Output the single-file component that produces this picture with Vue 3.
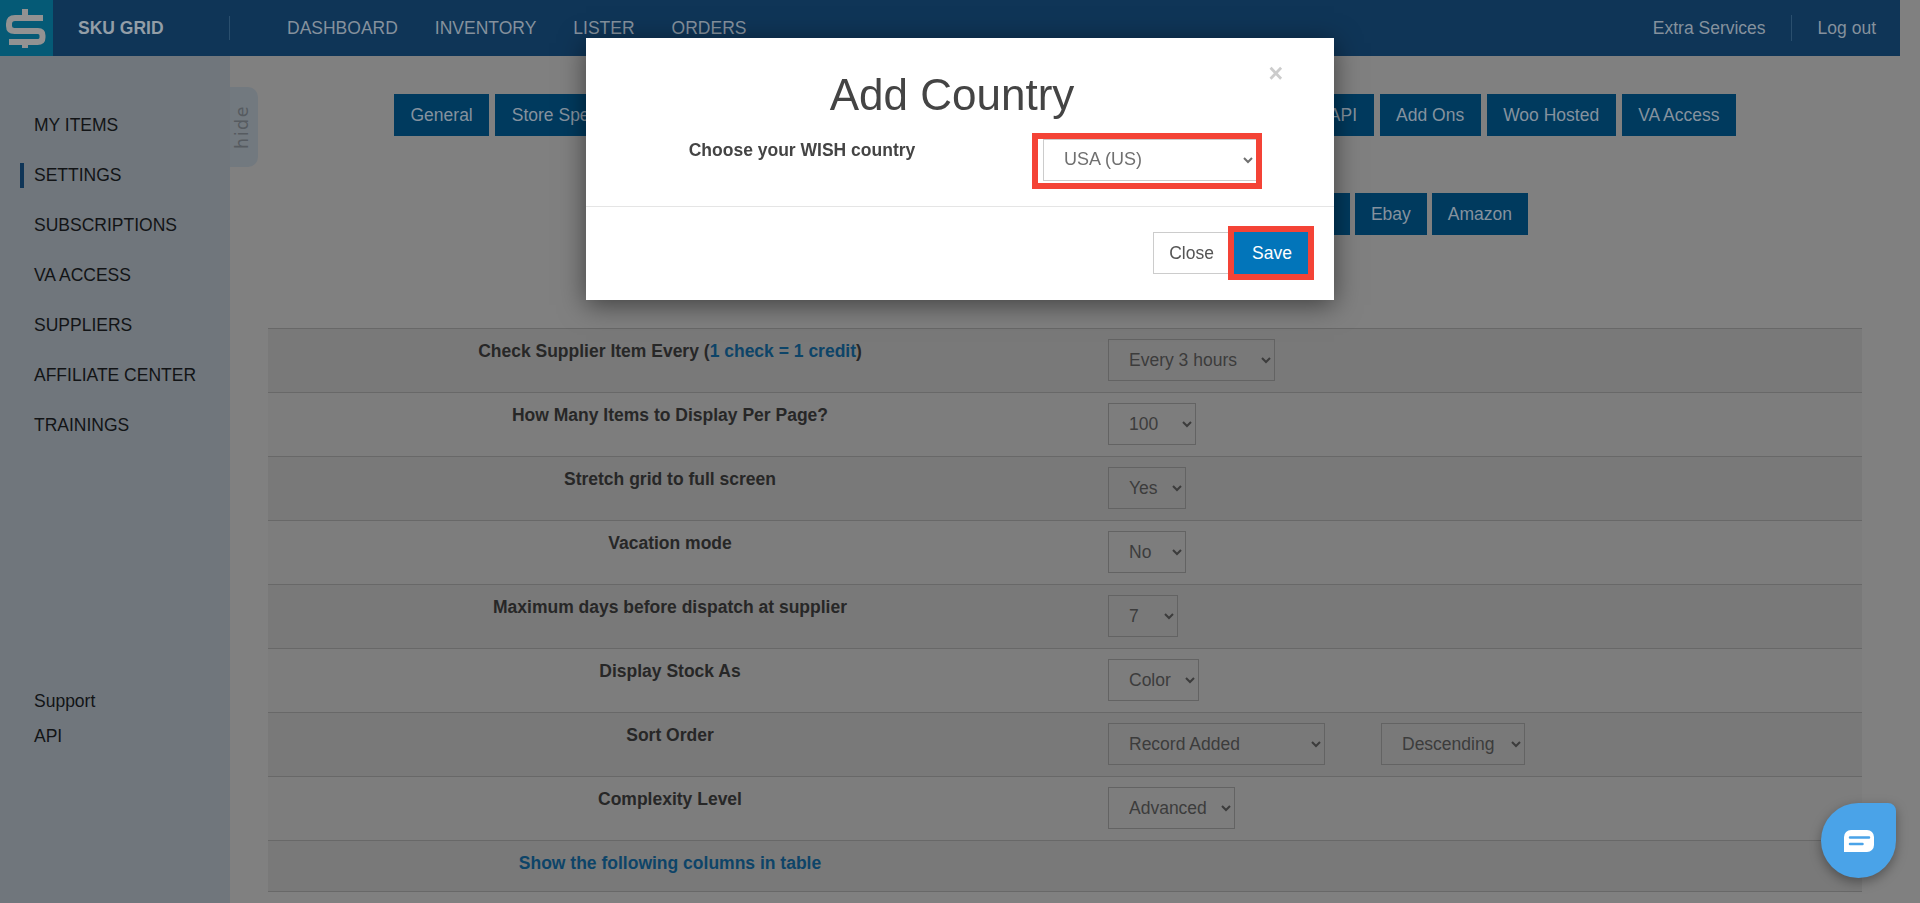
<script setup>
const topLinks = ['DASHBOARD', 'INVENTORY', 'LISTER', 'ORDERS']
const sideLinks = ['MY ITEMS', 'SETTINGS', 'SUBSCRIPTIONS', 'VA ACCESS', 'SUPPLIERS', 'AFFILIATE CENTER', 'TRAININGS']

const rows = [
  { label: 'Check Supplier Item Every', credit: true, selects: [{ text: 'Every 3 hours', width: 167 }] },
  { label: 'How Many Items to Display Per Page?', selects: [{ text: '100', width: 88 }] },
  { label: 'Stretch grid to full screen', selects: [{ text: 'Yes', width: 78 }] },
  { label: 'Vacation mode', selects: [{ text: 'No', width: 78 }] },
  { label: 'Maximum days before dispatch at supplier', selects: [{ text: '7', width: 70 }] },
  { label: 'Display Stock As', selects: [{ text: 'Color', width: 91 }] },
  { label: 'Sort Order', selects: [{ text: 'Record Added', width: 217 }, { text: 'Descending', width: 144 }] },
  { label: 'Complexity Level', selects: [{ text: 'Advanced', width: 127 }] }
]
</script>

<template>
  <div class="page">
    <header class="topbar">
      <div class="logo">
        <svg width="53" height="56" viewBox="0 0 53 56" fill="none" stroke="#929292" stroke-width="6">
          <path d="M25 9v7M25 41v7" />
          <path d="M43 18H15q-6 0-6 6v2q0 5 5.500 5H38q4.500 0 4.500 4.500v2q0 4.500-5 4.500H9" />
        </svg>
      </div>
      <div class="brand">SKU GRID</div>
      <nav class="top-links">
        <a v-for="link in topLinks" :key="link">{{ link }}</a>
      </nav>
      <div class="top-right">
        <a>Extra Services</a>
        <a class="logout">Log out</a>
      </div>
    </header>

    <div class="body">
      <aside class="sidebar">
        <ul class="side-links">
          <li v-for="link in sideLinks" :key="link" :class="{ active: link === 'SETTINGS' }">{{ link }}</li>
        </ul>
        <div class="side-bottom">
          <a>Support</a>
          <a>API</a>
        </div>
        <div class="hide-tab"><span>hide</span></div>
      </aside>

      <main class="content">
        <!-- the buttons in the middle of both rows sit behind the modal -->
        <div class="tabs tabs-main">
          <a class="tab">General</a>
          <a class="tab">Store Specific</a>
          <a v-for="n in 5" :key="n" class="tab grow"></a>
          <a class="tab">API</a>
          <a class="tab">Add Ons</a>
          <a class="tab">Woo Hosted</a>
          <a class="tab">VA Access</a>
        </div>
        <div class="tabs tabs-supplier">
          <a v-for="n in 6" :key="n" class="tab grow"></a>
          <a class="tab">Ebay</a>
          <a class="tab">Amazon</a>
        </div>

        <div class="settings">
          <div v-for="row in rows" :key="row.label" class="row">
            <div class="row-label">
              {{ row.label }}<template v-if="row.credit"> (<a class="link">1 check = 1 credit</a>)</template>
            </div>
            <div class="row-field">
              <select v-for="sel in row.selects" :key="sel.text" class="field" :style="{ width: sel.width + 'px' }">
                <option>{{ sel.text }}</option>
              </select>
            </div>
          </div>
          <div class="row row-short">
            <div class="row-label"><a class="link">Show the following columns in table</a></div>
          </div>
        </div>
      </main>
    </div>

    <div class="overlay">
      <div class="modal">
        <button class="close-x">×</button>
        <div class="modal-head">
          <h1>Add Country</h1>
        </div>
        <div class="modal-body">
          <label>Choose your WISH country</label>
          <div class="country">
            <select class="country-select"><option>USA (US)</option></select>
            <span class="mark mark-select"></span>
          </div>
        </div>
        <div class="modal-foot">
          <button class="btn btn-close">Close</button>
          <div class="save-wrap">
            <button class="btn btn-save">Save</button>
            <span class="mark mark-save"></span>
          </div>
        </div>
      </div>
    </div>

    <div class="chat">
      <svg width="30" height="22" viewBox="0 0 30 22">
        <path d="M7 0h16a7 7 0 0 1 7 7v8a7 7 0 0 1-7 7H0V7a7 7 0 0 1 7-7z" fill="#fff" />
        <path d="M6 7.500h19M6 14h12.500" stroke="#4aa3e8" stroke-width="2.500" stroke-linecap="round" />
      </svg>
    </div>
  </div>
</template>

<style>
html, body {
  margin: 0;
  height: 100%;
  overflow: hidden;
  background: #808080;
}
</style>

<style scoped>
.page {
  width: 1900px;
  height: 903px;
  overflow: hidden;
  font-family: "Liberation Sans", Arial, sans-serif;
  font-size: 17.500px;
  color: #272727;
}

.topbar {
  display: flex;
  align-items: center;
  height: 56px;
  background: #0f3557;
  color: #85919d;
}

.logo {
  width: 53px;
  height: 56px;
  background: #055a76;
}

.brand {
  width: 177px;
  padding-left: 25px;
  box-sizing: border-box;
  height: 24px;
  line-height: 24px;
  font-weight: 700;
  color: #939ea7;
  border-right: 1px solid #2a4f6e;
}

.top-links {
  display: flex;
  gap: 37px;
  padding-left: 57px;
  flex: 1;
}

.top-right {
  display: flex;
  align-items: center;
  padding-right: 24px;
}

.logout {
  margin-left: 25px;
  padding-left: 26px;
  line-height: 26px;
  border-left: 1px solid #2a4f6e;
}

.body {
  display: flex;
  height: 847px;
}

.sidebar {
  position: relative;
  flex: none;
  width: 230px;
  background: #70767c;
  color: #121416;
  padding-top: 44px;
  box-sizing: border-box;
}

.side-links {
  list-style: none;
  margin: 0;
  padding: 0 0 0 34px;
}

.side-links li {
  position: relative;
  height: 50px;
  line-height: 50px;
}

.side-links li.active::before {
  content: "";
  position: absolute;
  left: -14px;
  top: 13px;
  width: 4px;
  height: 25px;
  background: #0f3557;
}

.side-bottom {
  display: flex;
  flex-direction: column;
  margin-top: 234px;
  padding-left: 34px;
}

.side-bottom a {
  height: 35px;
  line-height: 35px;
}

.hide-tab {
  position: absolute;
  left: 230px;
  top: 31px;
  width: 28px;
  height: 80px;
  background: #72797f;
  border-radius: 0 10px 10px 0;
  display: flex;
  align-items: center;
  justify-content: center;
}

.hide-tab span {
  transform: rotate(-90deg);
  color: #565b60;
  font-family: "DejaVu Sans", sans-serif;
  font-size: 17.500px;
  letter-spacing: 1.500px;
  margin-left: -5px;
}

.content {
  flex: 1;
  padding: 38px 38px 0;
  min-width: 0;
}

.tabs {
  display: flex;
  gap: 5px;
  margin: 0 auto;
}

.tabs-main {
  width: 1342px;
  gap: 6px;
}

.tabs-main .tab {
  padding: 0 16.500px;
}

.tabs-supplier {
  width: 926px;
  margin-top: 57px;
}

.tab {
  flex: none;
  height: 42px;
  line-height: 42px;
  padding: 0 16px;
  background: #003a5e;
  color: #85929e;
  white-space: nowrap;
}

.tab.grow {
  flex: 1;
}

.settings {
  margin-top: 93px;
}

.row {
  display: grid;
  grid-template-columns: 804px 1fr;
  height: 64px;
  box-sizing: border-box;
  border-top: 1px solid #686868;
  background: #7d7d7d;
}

.row:nth-child(odd) {
  background: #797979;
}

.row-short {
  height: 52px;
  border-bottom: 1px solid #686868;
}

.row-label {
  padding-top: 12px;
  text-align: center;
  font-weight: 700;
  line-height: 21px;
}

.link {
  color: #0d4468;
}

.row-field {
  display: flex;
  gap: 56px;
  padding: 10px 0 0 36px;
}

.field {
  height: 42px;
  box-sizing: border-box;
  border: 1px solid #636363;
  background: transparent;
  color: #3c3c3c;
  font: inherit;
  font-weight: 400;
  padding: 0 0 0 16px;
  border-radius: 0;
}

.overlay {
  position: fixed;
  inset: 0;
  display: flex;
  justify-content: center;
  align-items: flex-start;
}

.modal {
  position: relative;
  width: 748px;
  height: 262px;
  margin-top: 38px;
  background: #fff;
  box-shadow: 0 5px 25px rgba(0, 0, 0, 0.5);
}

.close-x {
  position: absolute;
  top: 22px;
  right: 51px;
  padding: 0;
  border: 0;
  background: none;
  color: #ccc;
  font: 700 25px/26px "Liberation Sans", Arial, sans-serif;
}

.modal-head {
  padding: 30px 16px 0 0;
  text-align: center;
}

.modal-head h1 {
  margin: 0;
  height: 54px;
  font-size: 44px;
  line-height: 54px;
  font-weight: 400;
  color: #444;
}

.modal-body {
  display: grid;
  grid-template-columns: 400px 1fr;
  height: 85px;
  padding: 17px 0 0 16px;
  box-sizing: border-box;
  border-bottom: 1px solid #e5e5e5;
}

.modal-body label {
  text-align: center;
  font-weight: 700;
  line-height: 20px;
  padding-top: 1px;
  color: #444;
}

.country {
  position: relative;
  width: 214px;
  height: 42px;
  margin-left: 41px;
}

.country-select {
  width: 100%;
  height: 100%;
  box-sizing: border-box;
  border: 1px solid #ccc;
  background: #fff;
  color: #707070;
  font: 18px "Liberation Sans", Arial, sans-serif;
  padding: 0 0 2px 16px;
  border-radius: 0;
}

.mark {
  position: absolute;
  box-sizing: border-box;
  border: 6px solid #f44336;
}

.mark-select {
  top: -6px;
  bottom: -8px;
  left: -11px;
  right: -5px;
}

.mark-save {
  inset: -6px;
}

.modal-foot {
  display: flex;
  justify-content: flex-end;
  padding: 25px 26px 0 0;
}

.btn {
  height: 42px;
  box-sizing: border-box;
  font: 17.500px "Liberation Sans", Arial, sans-serif;
  border-radius: 0;
}

.btn-close {
  width: 78px;
  padding: 0 1px 0 0;
  border: 1px solid #ccc;
  background: #fff;
  color: #555;
}

.save-wrap {
  position: relative;
  height: 42px;
  margin-left: 3px;
}

.btn-save {
  width: 74px;
  padding: 0 0 0 2px;
  border: 0;
  background: #0275ba;
  color: #fff;
}

.chat {
  position: fixed;
  left: 1821px;
  top: 803px;
  width: 75px;
  height: 75px;
  display: flex;
  align-items: center;
  justify-content: center;
  background: #4aa3e8;
  border-radius: 50% 8px 50% 50%;
  box-shadow: 0 4px 12px rgba(0, 0, 0, 0.35);
}
</style>
